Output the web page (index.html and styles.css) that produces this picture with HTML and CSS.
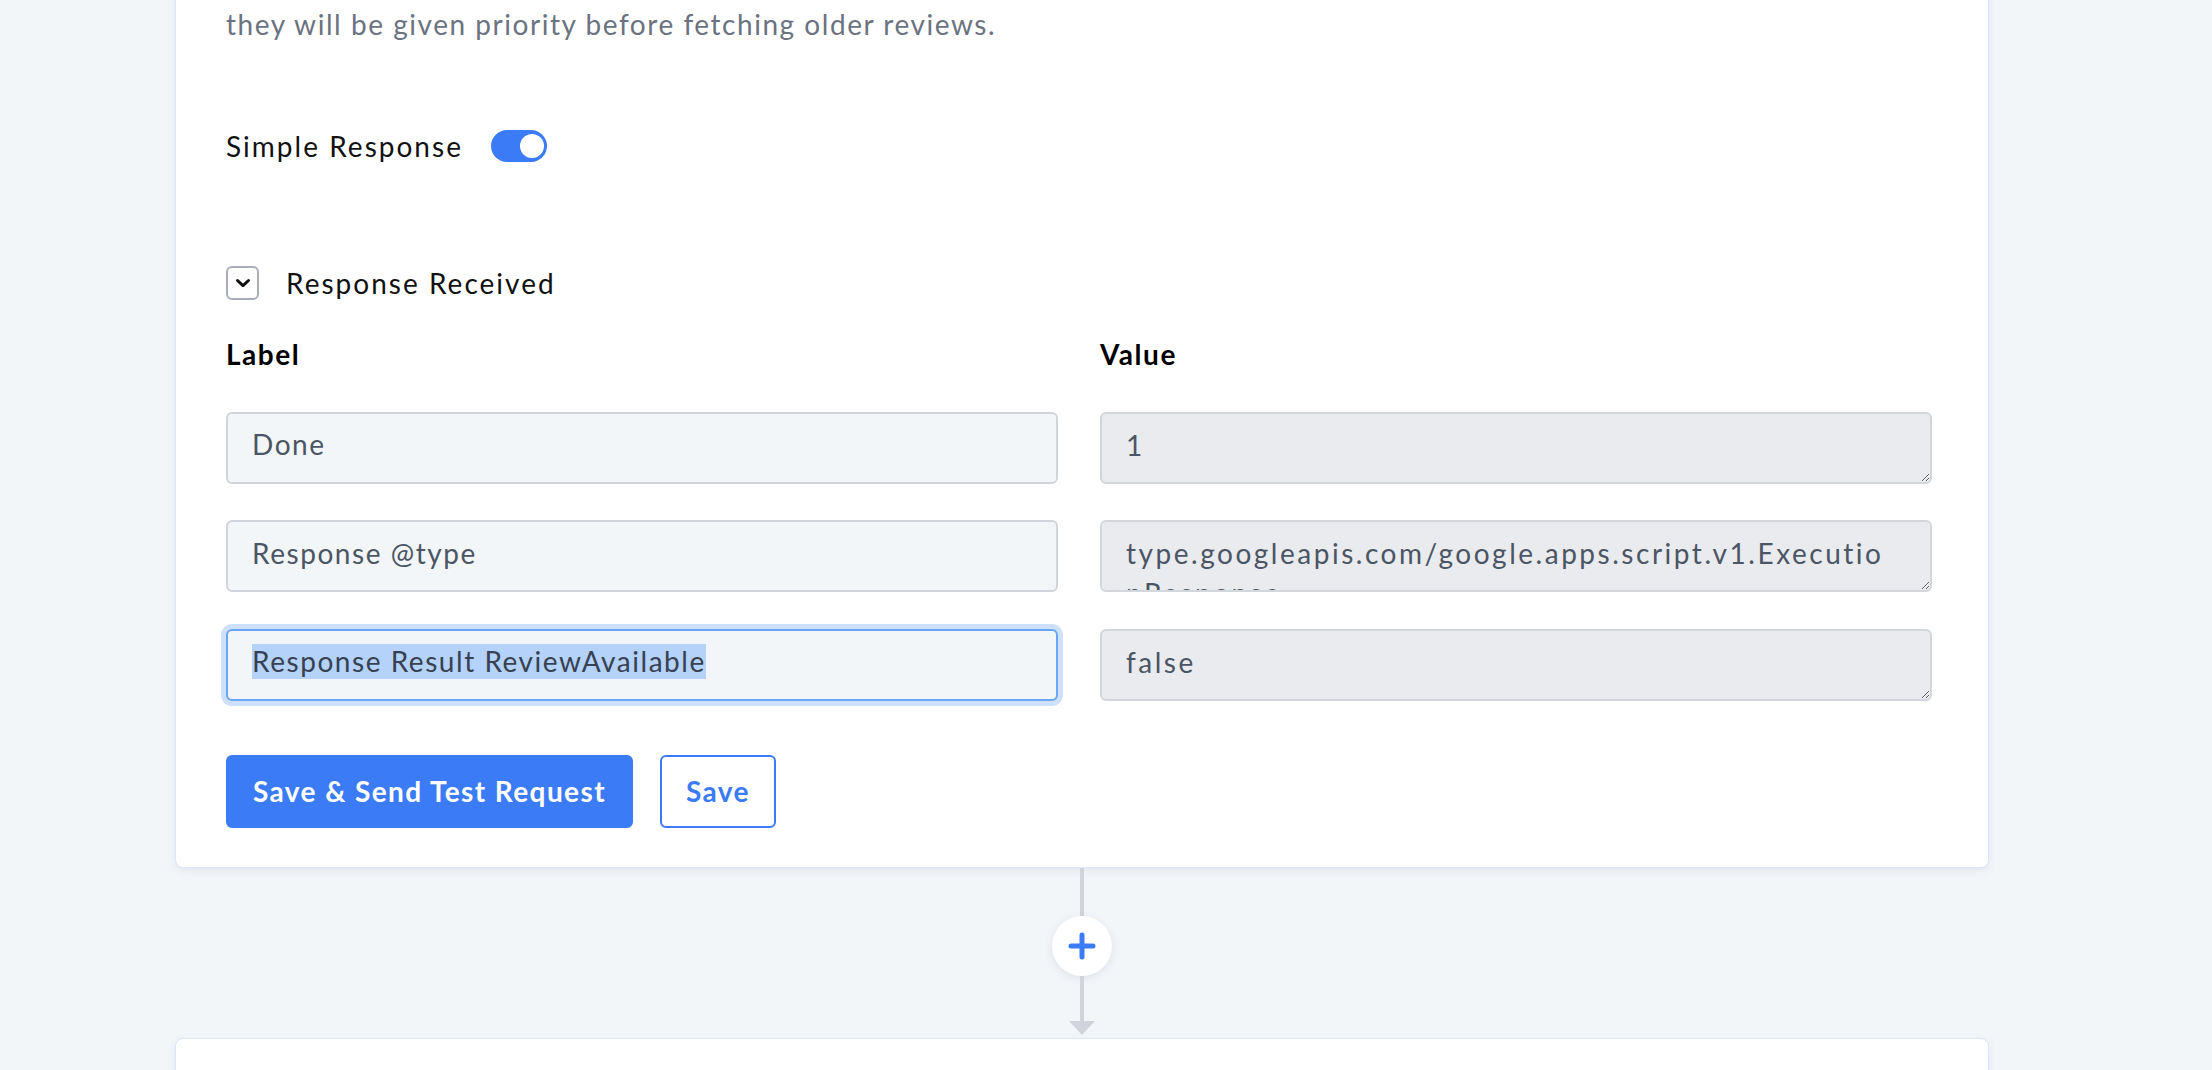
FILE: index.html
```html
<!DOCTYPE html>
<html lang="en">
<head>
<meta charset="utf-8">
<title>Workflow step</title>
<link rel="stylesheet" href="styles.css">
</head>
<body>
<main class="flow">
  <section class="card">
    <p class="desc">If new reviews are posted to the location while this step is running or waiting,<br>they will be given priority before fetching older reviews.</p>

    <div class="toggle-row">
      <span class="toggle-label">Simple Response</span>
      <span class="switch is-on"><span class="knob"></span></span>
    </div>

    <div class="collapse-row">
      <span class="chev-box">
        <svg width="16" height="10" viewBox="0 0 16 10"><path d="M2.5 2.5l5.5 5.2 5.5-5.2" fill="none" stroke="#111" stroke-width="3" stroke-linecap="round" stroke-linejoin="round"/></svg>
      </span>
      <span class="collapse-title">Response Received</span>
    </div>

    <div class="pairs">
      <div class="col-head">Label</div>
      <div class="col-head">Value</div>

      <input class="field" type="text" value="Done">
      <textarea class="value" readonly>1</textarea>

      <input class="field" type="text" value="Response @type">
      <textarea class="value" readonly>type.googleapis.com/google.apps.script.v1.ExecutionResponse</textarea>

      <div class="field is-focused"><span class="selected">Response Result ReviewAvailable</span></div>
      <textarea class="value" readonly>false</textarea>
    </div>

    <div class="actions">
      <button class="btn btn-primary" type="button">Save &amp; Send Test Request</button>
      <button class="btn btn-outline" type="button">Save</button>
    </div>
  </section>

  <div class="connector">
    <span class="line line-top"></span>
    <button class="add" type="button" aria-label="Add step">
      <svg width="28" height="28" viewBox="0 0 28 28"><path d="M14 3v22M3 14h22" stroke="#3b7cf6" stroke-width="5" stroke-linecap="round"/></svg>
    </button>
    <span class="line line-bottom"></span>
    <span class="arrow"></span>
  </div>

  <section class="card card-next"></section>
</main>
</body>
</html>
```

FILE: styles.css
```css
html, body {
  margin: 0;
  padding: 0;
}

body {
  background: #f3f6f9;
  font-family: Lato, "Noto Sans", "Liberation Sans", sans-serif;
  font-size: 28px;
  letter-spacing: 0.055em;
  color: #111;
  overflow: hidden;
}

.flow {
  width: 1814px;
  margin: -88px 0 0 175px;
  display: flex;
  flex-direction: column;
  align-items: center;
}

.card {
  width: 1814px;
  box-sizing: border-box;
  background: #fff;
  border: 1px solid #dce5fa;
  border-radius: 8px;
  box-shadow: 0 3px 8px rgba(40, 50, 90, 0.08);
  padding: 51px 56px 39px 50px;
}

.desc {
  margin: 0;
  font-size: 28px;
  line-height: 40px;
  color: #6b7280;
}

.toggle-row {
  margin-top: 86px;
  height: 32px;
  display: flex;
  align-items: center;
  gap: 28px;
}

.toggle-label,
.collapse-title {
  font-size: 28px;
  letter-spacing: 0.072em;
  color: #111;
}

.switch {
  width: 56px;
  height: 32px;
  box-sizing: border-box;
  border-radius: 16px;
  background: #3b7cf6;
  display: flex;
  align-items: center;
  justify-content: flex-end;
  padding: 0 3px;
}

.knob {
  width: 24px;
  height: 24px;
  border-radius: 50%;
  background: #fff;
}

.collapse-row {
  margin-top: 104px;
  height: 34px;
  display: flex;
  align-items: center;
  gap: 27px;
}

.chev-box {
  width: 33px;
  height: 34px;
  box-sizing: border-box;
  border: 2px solid #a9aeb8;
  border-radius: 6px;
  display: flex;
  align-items: center;
  justify-content: center;
}

.pairs {
  margin-top: 38px;
  display: grid;
  grid-template-columns: 832px 832px;
  column-gap: 42px;
  row-gap: 36.5px;
}

.col-head {
  font-size: 28px;
  line-height: 32px;
  font-weight: 700;
  color: #000;
  margin-bottom: -32px;
  padding-bottom: 37px;
}

.field {
  height: 72px;
  box-sizing: border-box;
  border: 2px solid #d1d5db;
  border-radius: 6px;
  background: #f3f6f9;
  padding: 0 24px 7px;
  font: inherit;
  font-size: 28px;
  letter-spacing: 0.055em;
  color: #4b5563;
  outline: none;
  display: flex;
  align-items: center;
}

.field.is-focused {
  border-color: #6aa6f8;
  box-shadow: 0 0 0 5px #cfe0fc;
}

.selected {
  background: #b4d2fa;
  color: #374151;
  line-height: 35px;
}

.value {
  display: block;
  height: 72px;
  box-sizing: border-box;
  border: 2px solid #d3d6db;
  border-radius: 6px;
  background: #e9ebef;
  padding: 11px 39px 0 24px;
  font: inherit;
  font-size: 28px;
  letter-spacing: 0.09em;
  line-height: 40px;
  color: #4b5563;
  resize: vertical;
  overflow: hidden;
  outline: none;
  margin: 0;
}

.actions {
  margin-top: 54px;
  display: flex;
  gap: 27px;
}

.btn {
  height: 73px;
  box-sizing: border-box;
  border-radius: 6px;
  font-family: inherit;
  font-size: 28px;
  letter-spacing: 0.05em;
  font-weight: 700;
  padding: 0 25px;
  cursor: pointer;
}

.btn-primary {
  background: #3b7cf6;
  border: 2px solid #3b7cf6;
  color: #fff;
}

.btn-outline {
  background: #fff;
  border: 2px solid #3b7cf6;
  color: #3b7cf6;
  padding: 0 24px;
}

.connector {
  display: flex;
  flex-direction: column;
  align-items: center;
}

.line {
  width: 4px;
  background: #d1d5db;
}

.line-top {
  height: 48px;
}

.line-bottom {
  height: 45px;
}

.add {
  width: 60px;
  height: 60px;
  border: none;
  border-radius: 50%;
  background: #fff;
  box-shadow: 0 2px 10px rgba(30, 40, 70, 0.1);
  padding: 0;
  display: flex;
  align-items: center;
  justify-content: center;
}

.arrow {
  width: 0;
  height: 0;
  border-left: 13px solid transparent;
  border-right: 13px solid transparent;
  border-top: 14px solid #d1d5db;
}

.card-next {
  margin-top: 3px;
  height: 80px;
  padding: 0;
}
```
